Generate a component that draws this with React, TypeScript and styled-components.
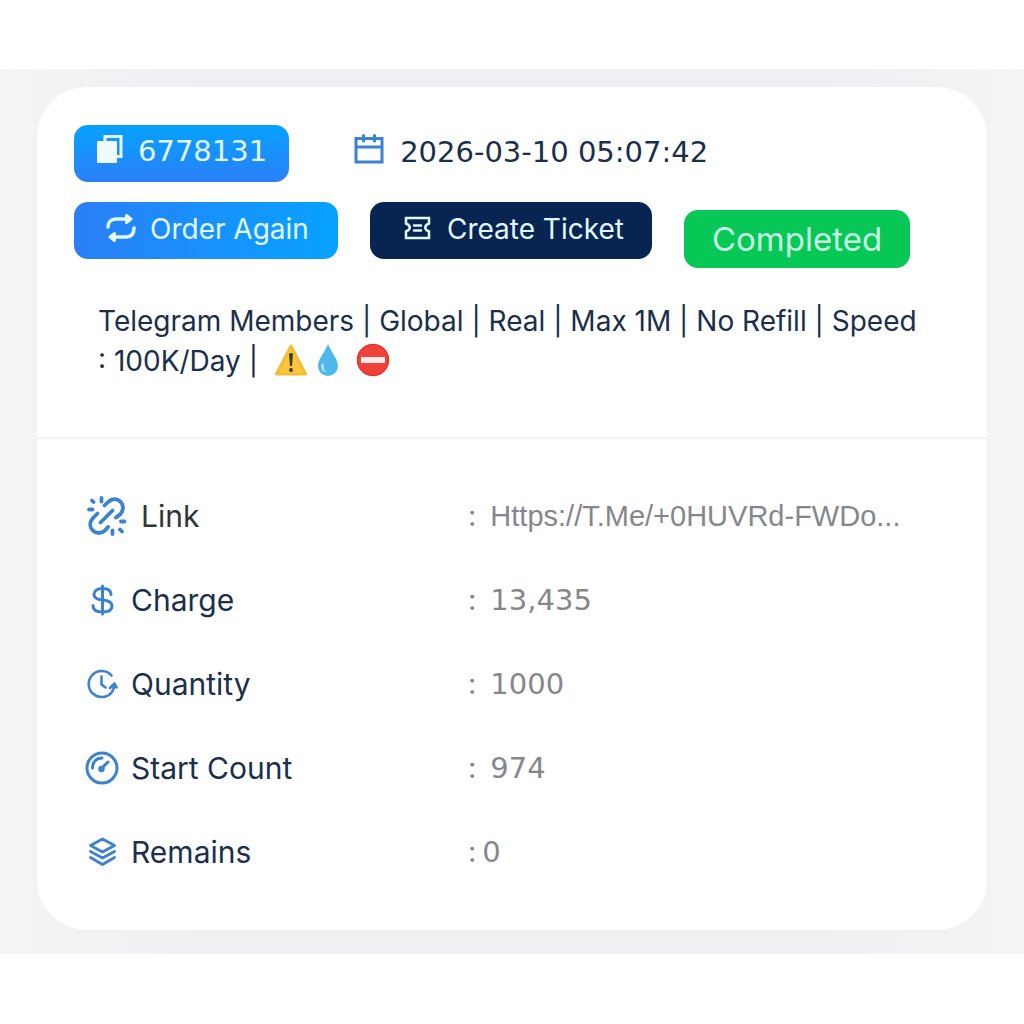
import React from "react";
import styled, { createGlobalStyle } from "styled-components";

const numerals = `"DejaVu Sans", "Liberation Sans", sans-serif`;

const GlobalStyle = createGlobalStyle`
  *, *::before, *::after { box-sizing: border-box; }
  body {
    margin: 0;
    background: #ffffff;
    color: #1b2f4b;
    font-family: Inter, "Liberation Sans", sans-serif;
  }
`;

const Page = styled.main`
  padding: 69px 0;
`;

const Band = styled.section`
  padding: 18px 37px 24px;
  background: linear-gradient(90deg, #f4f4f4 0%, #eff0f2 20%, #eff0f2 80%, #f4f4f4 100%);
`;

const Card = styled.article`
  background: #ffffff;
  border-radius: 50px;
`;

const CardHead = styled.header`
  display: flex;
  flex-direction: column;
  gap: 20px;
  padding: 38px 37px 56px;
  border-bottom: 2px solid #f2f2f3;
`;

const MetaRow = styled.div`
  display: flex;
  align-items: flex-start;
  gap: 65px;
`;

const ActionRow = styled.div`
  display: flex;
  align-items: flex-start;
  gap: 32px;
`;

const Button = styled.button<{ $fill: string }>`
  display: flex;
  align-items: center;
  gap: 14px;
  height: 57px;
  padding: 0 29px 3px 32px;
  border: 0;
  border-radius: 14px;
  background: ${(p) => p.$fill};
  color: #e0f8ff;
  font-family: inherit;
  font-size: 28px;
  line-height: 40px;
  white-space: nowrap;
  cursor: pointer;
`;

const CopyButton = styled(Button)`
  padding: 0 22px 6px;
  font-family: ${numerals};
  font-size: 29px;
`;

const TicketButton = styled(Button)`
  gap: 16px;
  padding: 0 28px 3px 34px;
`;

const Status = styled.span`
  margin-top: 8px;
  padding: 0 28px;
  border-radius: 14px;
  background: #07c756;
  color: #c5fbe0;
  font-size: 33px;
  line-height: 58px;
`;

const Stamp = styled.time`
  display: flex;
  align-items: center;
  gap: 16px;
  height: 53px;
  font-family: ${numerals};
  font-size: 29px;
  white-space: nowrap;
`;

const Service = styled.p`
  margin: 13px 0 0;
  padding: 0 24px;
  font-size: 28px;
  line-height: 40px;
`;

const Flags = styled.span`
  margin-left: 8px;
  white-space: nowrap;
`;

const Emoji = styled.svg`
  display: inline-block;
  vertical-align: -6px;
  margin-right: 3px;
`;

const Details = styled.dl`
  margin: 0;
  padding: 35px 48px 36px;
`;

const Detail = styled.div`
  display: grid;
  grid-template-columns: 383px 1fr;
  align-items: center;
  height: 84px;
  font-size: 30px;
  line-height: 40px;
`;

const Term = styled.dt<{ $plain?: boolean }>`
  display: flex;
  align-items: center;
  gap: 12px;
  color: ${(p) => (p.$plain ? "#333438" : "#1b2f4b")};
`;

const Value = styled.dd<{ $tight?: boolean }>`
  display: flex;
  gap: ${(p) => (p.$tight ? 6 : 14)}px;
  margin: 0;
  color: #86878c;
  font-family: ${numerals};
  font-size: 29px;
  white-space: nowrap;

  &::before {
    content: ":";
    font-family: Inter, "Liberation Sans", sans-serif;
  }
`;

const LinkOut = styled.a`
  color: inherit;
  font-family: "Liberation Sans", Arial, sans-serif;
  text-decoration: none;
`;

const Line = styled.svg`
  flex: none;
  fill: none;
  stroke: #3b82cf;
  stroke-width: 3;
  stroke-linecap: round;
  stroke-linejoin: round;
`;

const LightLine = styled(Line)`
  stroke: #e0f8ff;
`;

const CopyIcon = () => (
  <LightLine width="28" height="34" viewBox="0 0 28 34" aria-hidden="true">
    <path d="M9 7V2.5h16v20h-4" strokeLinecap="butt" strokeLinejoin="miter" />
    <path d="M2 8h18v20H2z" fill="#f0fbff" stroke="#f0fbff" strokeWidth="2" />
  </LightLine>
);

const RepeatIcon = () => (
  <LightLine width="30" height="32" viewBox="0 0 30 32" aria-hidden="true">
    <path strokeWidth="3.500" d="M2 14c0-5 3-8 8-8h11M28 15c0 6-3 9-8 9H8" />
    <path d="M20.500 2.500l4.500 3.500-4.500 3.500zM8.500 20.500L4 24l4.500 3.500z" fill="#e0f8ff" />
  </LightLine>
);

const TicketIcon = () => (
  <LightLine width="27" height="27" viewBox="0 0 27 27" aria-hidden="true">
    <path
      strokeWidth="2.500"
      strokeLinejoin="miter"
      d="M2 2h23v5.500c-5 2-5 6 0 8V22H2v-6.500c5-2 5-6 0-8zM10 9.500h7M10 14.500h7"
    />
  </LightLine>
);

const CalendarIcon = () => (
  <Line width="30" height="36" viewBox="0 0 30 36" aria-hidden="true">
    <path strokeLinejoin="miter" d="M2 4.500h26V28H2zM2 13h26M9.500 1.500V7M20.500 1.500V7" />
  </Line>
);

const BrokenLinkIcon = () => (
  <Line width="40" height="40" viewBox="0 0 40 40" aria-hidden="true">
    <path
      strokeWidth="3.800"
      d="M17.500 9.500L21 6c9-8 20 3 12.500 12L29 21.500M10.500 17.500L6 22c-8 9 3 20 12 12.500l3-3.500M13.500 26.500l12-12M14.500 2v3.500M5 4.500l1.500 1.500M2 13.500h3.500M25.500 34.500V38M33 33.500l2 2M34 25.500h3.500"
    />
  </Line>
);

const DollarIcon = () => (
  <Line width="31" height="32" viewBox="0 0 31 32" aria-hidden="true">
    <path d="M24 10.500c0-4-3-6-8.500-6S7 7 7 10.500s3 5 8.500 5.500S25 18.500 25 22s-3 6-9.500 6S6 26 6 21.500M15.500 2v28" />
  </Line>
);

const HistoryIcon = () => (
  <Line width="31" height="30" viewBox="0 0 31 30" aria-hidden="true">
    <path strokeWidth="2.600" d="M24.500 6.500A13 13 0 1 0 25 23q2-3 2.500-7M23 19l4.500-4.500 2 4M14.500 7.500v8l4 3" />
  </Line>
);

const GaugeIcon = () => (
  <Line width="34" height="34" viewBox="0 0 34 34" aria-hidden="true">
    <circle cx="17" cy="17" r="15" />
    <path d="M7.500 17c0-6 4-10 9.500-10M17 17l6-6" />
    <circle cx="16.500" cy="18" r="1.700" fill="#3b82cf" />
  </Line>
);

const LayersIcon = () => (
  <Line width="31" height="30" viewBox="0 0 31 30" aria-hidden="true">
    <path
      strokeWidth="2.800"
      d="M15.500 2l12 6.500-12 6.500-12-6.500zM3.500 14.500l12 6.500 12-6.500M3.500 20.500l12 7 12-7"
    />
  </Line>
);

const IconSlot = styled.span<{ $wide?: boolean }>`
  display: flex;
  justify-content: center;
  width: ${(p) => (p.$wide ? 44 : 34)}px;
`;

const WarningEmoji = () => (
  <Emoji width="34" height="34" viewBox="0 0 34 34" role="img" aria-label="Warning">
    <path d="M17 3L31.500 31h-29z" fill="#fcc63b" stroke="#f4bd38" strokeWidth="3" strokeLinejoin="round" />
    <path d="M15 11q2-2 4 0l-1 12h-2z" fill="#3d3d3c" />
    <circle cx="17" cy="27" r="2" fill="#3d3d3c" />
  </Emoji>
);

const DropEmoji = () => (
  <Emoji width="34" height="34" viewBox="0 0 34 34" role="img" aria-label="Droplet">
    <path d="M17 1C14 9 7 16 7 23a10 10 0 0 0 20 0C27 16 20 9 17 1z" fill="#4fb8eb" />
    <path d="M10 23c0 4 3 7 6 6-3-1-3-4-3-7s-3-2-3 1z" fill="#a6e3fb" />
  </Emoji>
);

const NoEntryEmoji = () => (
  <Emoji width="34" height="34" viewBox="0 0 34 34" role="img" aria-label="No entry">
    <circle cx="17" cy="17" r="15.500" fill="#f0423a" stroke="#d93832" strokeWidth="1.500" />
    <rect x="5" y="14" width="24" height="6" rx="1" fill="#ffeceb" />
  </Emoji>
);

const details = [
  {
    label: "Link",
    value: <LinkOut href="#link">Https://T.Me/+0HUVRd-FWDo...</LinkOut>,
    icon: <BrokenLinkIcon />,
    wide: true,
  },
  { label: "Charge", value: "13,435", icon: <DollarIcon /> },
  { label: "Quantity", value: "1000", icon: <HistoryIcon /> },
  { label: "Start Count", value: "974", icon: <GaugeIcon /> },
  { label: "Remains", value: "0", icon: <LayersIcon />, tight: true },
];

export default function App() {
  return (
    <>
      <GlobalStyle />
      <Page>
        <Band>
          <Card>
            <CardHead>
              <MetaRow>
                <CopyButton $fill="linear-gradient(180deg, #06a2ff, #2b7ff8)">
                  <CopyIcon />
                  6778131
                </CopyButton>
                <Stamp dateTime="2026-03-10T05:07:42">
                  <CalendarIcon />
                  2026-03-10 05:07:42
                </Stamp>
              </MetaRow>
              <ActionRow>
                <Button $fill="linear-gradient(90deg, #2b7ff8, #06a2ff)">
                  <RepeatIcon />
                  Order Again
                </Button>
                <TicketButton $fill="#082451">
                  <TicketIcon />
                  Create Ticket
                </TicketButton>
                <Status>Completed</Status>
              </ActionRow>
              <Service>
                Telegram Members | Global | Real | Max 1M | No Refill | Speed : 100K/Day |{" "}
                <Flags>
                  <WarningEmoji />
                  <DropEmoji /> <NoEntryEmoji />
                </Flags>
              </Service>
            </CardHead>
            <Details>
              {details.map((d) => (
                <Detail key={d.label}>
                  <Term $plain={d.wide}>
                    <IconSlot $wide={d.wide}>{d.icon}</IconSlot>
                    {d.label}
                  </Term>
                  <Value $tight={d.tight}>{d.value}</Value>
                </Detail>
              ))}
            </Details>
          </Card>
        </Band>
      </Page>
    </>
  );
}
